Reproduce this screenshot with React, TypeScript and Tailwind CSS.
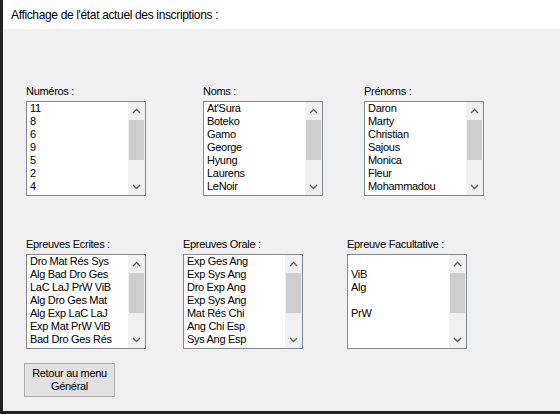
import React from 'react'

const listFont = { fontFamily: '"Liberation Sans", Arial, sans-serif' }

function Chevron({ up }: { up?: boolean }) {
  return (
    <svg width="9" height="6" viewBox="0 0 9 6" className="block">
      <polyline
        points={up ? '1,5 4.5,1.5 8,5' : '1,1 4.5,4.5 8,1'}
        fill="none"
        stroke="#606060"
        strokeWidth="1.4"
      />
    </svg>
  )
}

function ListBox({ items }: { items: string[] }) {
  return (
    <div className="flex h-[95px] w-[120px] border border-[#828790] bg-white">
      <div className="flex-1 overflow-hidden pl-[3px] text-[11px] leading-[13px] tracking-[-0.3px] text-black">
        {items.map((it, i) => (
          <div key={i} className="h-[13px] whitespace-nowrap">
            {it}
          </div>
        ))}
      </div>
      {/* vertical scrollbar */}
      <div className="flex w-[17px] flex-col bg-[#f0f0f0]">
        <div className="flex h-[17px] items-center justify-center">
          <Chevron up />
        </div>
        <div className="flex-1 px-[1px] pt-[1px]">
          <div className="h-[40px] bg-[#cdcdcd]" />
        </div>
        <div className="flex h-[17px] items-center justify-center">
          <Chevron />
        </div>
      </div>
    </div>
  )
}

function Field({ label, items, className = '' }: { label: string; items: string[]; className?: string }) {
  return (
    <div className={`flex flex-col ${className}`}>
      <div className="mb-[3px] h-[13px] text-[11px] leading-[13px] tracking-[-0.3px] text-black whitespace-nowrap">
        {label}
      </div>
      <ListBox items={items} />
    </div>
  )
}

export default function App() {
  return (
    <div className="flex h-[414px] w-[560px] bg-[#232323]" style={listFont}>
      <div className="ml-[3px] flex h-[411px] w-[557px] flex-col">
        {/* title */}
        <div className="flex h-[29px] items-center bg-white pl-[8px] text-[12px] tracking-[-0.35px] text-black">
          Affichage de l'état actuel des inscriptions :
        </div>

        <div className="flex flex-1 flex-col bg-[#f0f0f0] pt-[56px]">
          <div className="flex pl-[23px]">
            <Field label="Numéros :" items={['11', '8', '6', '9', '5', '2', '4']} />
            <Field
              className="ml-[57px]"
              label="Noms :"
              items={['At\'Sura', 'Boteko', 'Gamo', 'George', 'Hyung', 'Laurens', 'LeNoir']}
            />
            <Field
              className="ml-[41px]"
              label="Prénoms :"
              items={['Daron', 'Marty', 'Christian', 'Sajous', 'Monica', 'Fleur', 'Mohammadou']}
            />
          </div>

          <div className="mt-[42px] flex pl-[23px]">
            <Field
              label="Epreuves Ecrites :"
              items={[
                'Dro Mat Rés Sys',
                'Alg Bad Dro Ges',
                'LaC LaJ PrW ViB',
                'Alg Dro Ges Mat',
                'Alg Exp LaC LaJ',
                'Exp Mat PrW ViB',
                'Bad Dro Ges Rés',
              ]}
            />
            <Field
              className="ml-[37px]"
              label="Epreuves Orale :"
              items={[
                'Exp Ges Ang',
                'Exp Sys Ang',
                'Dro Exp Ang',
                'Exp Sys Ang',
                'Mat Rés Chi',
                'Ang Chi Esp',
                'Sys Ang Esp',
              ]}
            />
            <Field className="ml-[44px]" label="Epreuve Facultative :" items={['', 'ViB', 'Alg', '', 'PrW']} />
          </div>

          <div className="ml-[21px] mt-[14px]">
            <button className="flex h-[34px] w-[91px] flex-col items-center justify-center border border-[#adadad] bg-[#e1e1e1] text-[11px] leading-[13px] tracking-[-0.3px] text-black">
              <span>Retour au menu</span>
              <span>Général</span>
            </button>
          </div>
        </div>
      </div>
    </div>
  )
}
